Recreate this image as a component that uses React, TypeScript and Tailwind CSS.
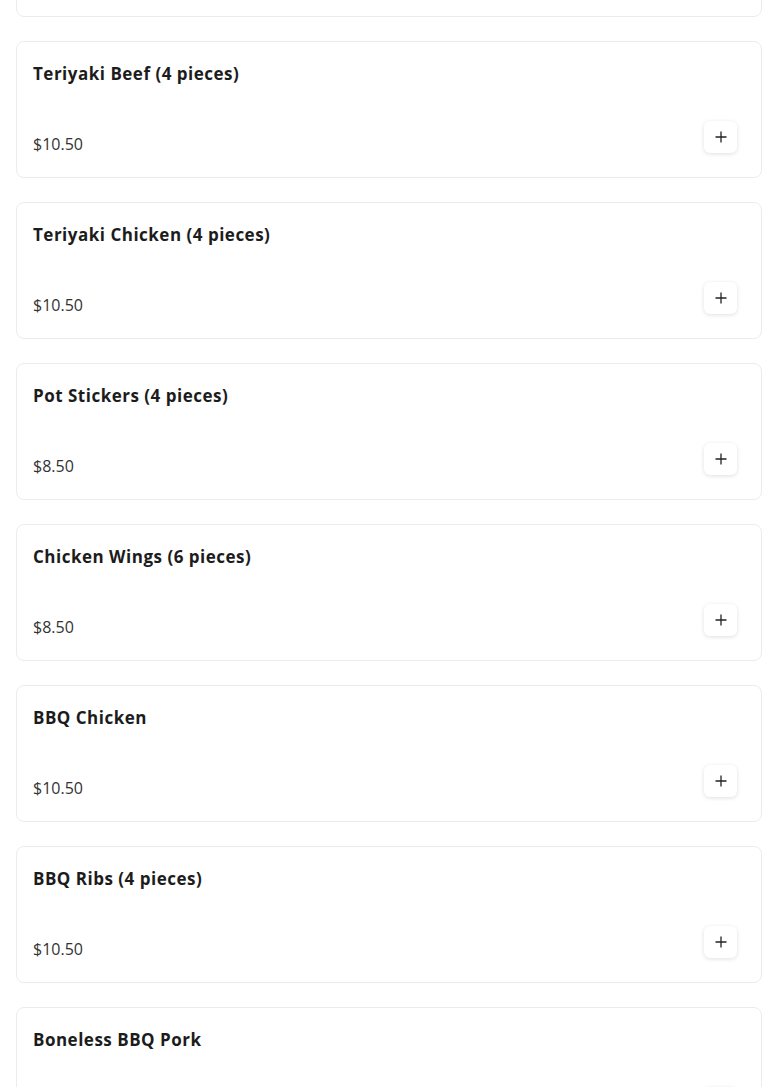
import React from "react";

const items = [
  { name: "Teriyaki Beef (4 pieces)", price: "$10.50" },
  { name: "Teriyaki Chicken (4 pieces)", price: "$10.50" },
  { name: "Pot Stickers (4 pieces)", price: "$8.50" },
  { name: "Chicken Wings (6 pieces)", price: "$8.50" },
  { name: "BBQ Chicken", price: "$10.50" },
  { name: "BBQ Ribs (4 pieces)", price: "$10.50" },
  { name: "Boneless BBQ Pork", price: "$10.50" },
];

function PlusIcon() {
  return (
    <svg width="12" height="12" viewBox="0 0 12 12" fill="none">
      <path d="M6 0.5V11.5M0.5 6H11.5" stroke="#222" strokeWidth="1.3" />
    </svg>
  );
}

export default function App() {
  return (
    <div
      className="h-[1087px] overflow-hidden bg-white"
      style={{ fontFamily: '"Open Sans", "Liberation Sans", sans-serif' }}
    >
      <div className="-mt-[120px] px-4 flex flex-col gap-6">
        <div className="h-[137px] border border-[#ececec] rounded-lg" />
        {items.map((it, i) => (
          <div
            key={i}
            className="border border-[#ececec] rounded-lg pl-4 pr-6 pt-5 pb-6"
          >
            <div className="text-[17px] leading-6 font-bold text-[#1c1c1c] tracking-[0.5px]">
              {it.name}
            </div>
            <div className="mt-[35px] flex items-end justify-between h-8">
              <div className="-mb-[3px] text-[16px] leading-6 text-[#333]">{it.price}</div>
              <button className="w-[33px] h-8 rounded-md bg-white flex items-center justify-center shadow-[0_1px_4px_rgba(0,0,0,0.13)]">
                <PlusIcon />
              </button>
            </div>
          </div>
        ))}
      </div>
    </div>
  );
}
